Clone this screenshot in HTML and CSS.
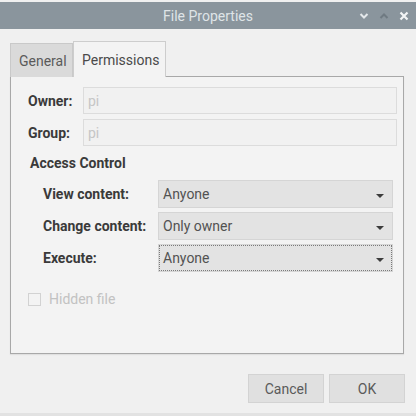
FILE: index.html
```html
<!DOCTYPE html>
<html>
<head>
<meta charset="utf-8">
<link rel="stylesheet" href="styles.css">
</head>
<body>
<div class="window">
  <div class="titlebar">
    <div></div>
    <div class="title">File Properties</div>
    <div class="controls">
      <svg class="ctl" width="10" height="8" viewBox="0 0 10 8"><path d="M1.5 2 L5 5.5 L8.5 2" fill="none" stroke="#e4e8eb" stroke-width="2"/></svg>
      <svg class="ctl" width="10" height="8" viewBox="0 0 10 8"><path d="M1.5 6 L5 2.5 L8.5 6" fill="none" stroke="#6f7a82" stroke-width="2"/></svg>
      <svg class="ctl" width="10" height="10" viewBox="0 0 10 10"><path d="M1.5 1.5 L8.5 8.5 M8.5 1.5 L1.5 8.5" fill="none" stroke="#f2f4f5" stroke-width="2.2"/></svg>
    </div>
  </div>
  <div class="content">
    <div class="tabs">
      <div class="tab">General</div>
      <div class="tab active">Permissions</div>
    </div>
    <div class="panel">
      <div class="idrow">
        <span class="lbl">Owner:</span>
        <div class="entry">pi</div>
      </div>
      <div class="idrow">
        <span class="lbl">Group:</span>
        <div class="entry">pi</div>
      </div>
      <div class="section">Access Control</div>
      <div class="access">
        <span class="lbl">View content:</span>
        <div class="combo"><span>Anyone</span><span class="arrow"></span></div>
        <span class="lbl">Change content:</span>
        <div class="combo"><span>Only owner</span><span class="arrow"></span></div>
        <span class="lbl">Execute:</span>
        <div class="combo focus"><span>Anyone</span><span class="arrow"></span></div>
      </div>
      <div class="check">
        <span class="box"></span>
        <span>Hidden file</span>
      </div>
    </div>
    <div class="buttons">
      <div class="btn">Cancel</div>
      <div class="btn">OK</div>
    </div>
  </div>
</div>
</body>
</html>
```
FILE: styles.css
```css
* { box-sizing: border-box; }
html, body { margin: 0; padding: 0; }
body {
  width: 416px;
  height: 416px;
  background: #eeeeee;
  font-family: Roboto, "Liberation Sans", sans-serif;
  font-size: 14px;
  overflow: hidden;
}
.window {
  width: 416px;
  height: 416px;
  padding-top: 2px;
  background: #f0f0f0;
  border-bottom: 3px solid #e2e2e2;
  display: flex;
  flex-direction: column;
}
.titlebar {
  height: 27px;
  background: #8a959d;
  display: grid;
  grid-template-columns: 1fr auto 1fr;
  align-items: center;
}
.title {
  color: #dfe4e7;
  font-size: 14px;
}
.controls {
  display: flex;
  justify-content: flex-end;
  align-items: center;
  gap: 10px;
  padding-right: 7px;
}
.content {
  flex: 1;
  padding: 12px 12px 0 10px;
  display: flex;
  flex-direction: column;
}
.tabs {
  display: flex;
  align-items: flex-end;
  height: 35px;
  position: relative;
  z-index: 1;
}
.tab {
  height: 34px;
  padding: 0 8px;
  display: flex;
  align-items: center;
  background: #dadada;
  border: 1px solid #c9c9c9;
  border-bottom: none;
  color: #5a5a5a;
  margin-bottom: -1px;
}
.tab.active {
  height: 36px;
  background: #f3f3f3;
  border-color: #cdcdcd;
  color: #4a4a4a;
  padding: 0 8px 0 8px;
  width: 93px;
}
.tab:first-child { width: 63px; }
.panel {
  height: 278px;
  width: 394px;
  border: 1px solid #a8a8a8;
  background: #f3f3f3;
  padding: 10px 6px 0 17px;
  box-shadow: 0 1px 1px #e0e0e0;
}
.lbl {
  font-weight: bold;
  color: #3a3a3a;
}
.idrow {
  display: flex;
  align-items: center;
  height: 27px;
  margin-bottom: 5px;
}
.idrow .lbl { width: 55px; }
.entry {
  flex: 1;
  height: 27px;
  border: 1px solid #dcdcdc;
  background: #f1f1f1;
  color: #c6c6c6;
  padding-left: 4px;
  display: flex;
  align-items: center;
}
.section {
  font-weight: bold;
  color: #3a3a3a;
  margin: 9px 0 0 2px;
  height: 20px;
}
.access {
  display: grid;
  grid-template-columns: 115px 235px;
  row-gap: 4px;
  padding-left: 15px;
  margin-top: 5px;
  align-items: center;
}
.combo {
  height: 28px;
  background: #e3e3e3;
  border: 1px solid #d5d5d5;
  color: #525252;
  display: flex;
  align-items: center;
  justify-content: space-between;
  padding: 0 8px 0 4px;
}
.combo.focus {
  outline: 1px dotted #7a7a7a;
  outline-offset: -2px;
}
.arrow {
  width: 0;
  height: 0;
  border-left: 4px solid transparent;
  border-right: 4px solid transparent;
  border-top: 4px solid #3c3c3c;
  margin-top: 3px;
}
.check {
  display: flex;
  align-items: center;
  gap: 8px;
  margin-top: 19px;
  color: #c2c2c2;
}
.box {
  width: 13px;
  height: 13px;
  border: 1px solid #d2d2d2;
  background: #f3f3f3;
}
.buttons {
  display: flex;
  justify-content: flex-end;
  gap: 5px;
  margin-top: 20px;
  margin-right: -1px;
}
.btn {
  width: 76px;
  height: 29px;
  background: #e0e0e0;
  border: 1px solid #d3d3d3;
  color: #5a5a5a;
  display: flex;
  align-items: center;
  justify-content: center;
}
```
